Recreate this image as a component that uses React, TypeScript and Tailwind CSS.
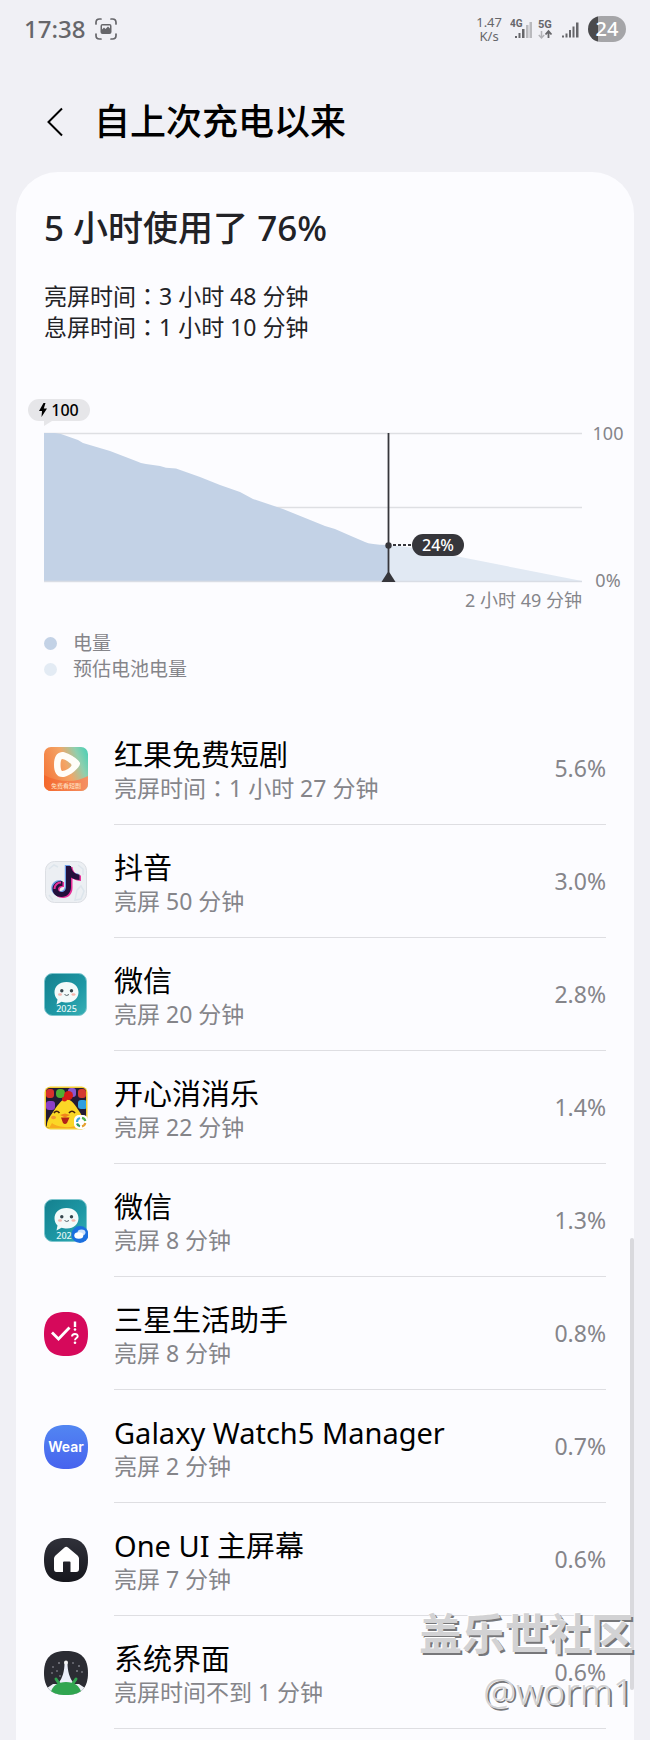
import type { ReactNode } from "react";

const SQUIRCLE =
  "M22 0C37 0 44 7 44 22C44 37 37 44 22 44C7 44 0 37 0 22C0 7 7 0 22 0Z";

function IconFrame({ children }: { children: ReactNode }) {
  return (
    <svg viewBox="0 0 44 44" className="size-11 shrink-0" aria-hidden="true">
      {children}
    </svg>
  );
}

function DramaIcon() {
  return (
    <IconFrame>
      <defs>
        <linearGradient id="drama" x1="0" y1="0.6" x2="1" y2="0.2">
          <stop offset="0" stopColor="#f5793c" />
          <stop offset="0.5" stopColor="#f3a566" />
          <stop offset="0.8" stopColor="#8fcfae" />
          <stop offset="1" stopColor="#57cfb4" />
        </linearGradient>
        <linearGradient id="dramaBase" x1="0" y1="0" x2="1" y2="0">
          <stop offset="0" stopColor="#f4682c" />
          <stop offset="1" stopColor="#f59063" />
        </linearGradient>
        <clipPath id="dramaClip">
          <rect width="44" height="44" rx="7" />
        </clipPath>
      </defs>
      <g clipPath="url(#dramaClip)">
        <rect width="44" height="44" fill="url(#drama)" />
        <path d="M0 28C8 32 16 34 24 34C32 34 38 32 44 29V44H0Z" fill="url(#dramaBase)" />
      </g>
      <path
        fillRule="evenodd"
        d="M18 5C22 4.500 35 12 36 16C37 20 26 29 20 30C13 31 10 25 10 18C10 11 12 5.500 18 5ZM18 12C16 12.500 16 24 18.500 24C21 24 28 20 27.500 18C27 16 20 11.500 18 12Z"
        fill="#fffdf8"
      />
      <text x="22" y="41" textAnchor="middle" fontSize="6" fill="#ffe6c8">
        免费看短剧
      </text>
    </IconFrame>
  );
}

const NOTE =
  "M22 6H27C27.500 11 30.500 14 35.500 14.500V20C32 20 29.500 19 27 17.500V27C27 33 23 37 17.500 37C12 37 8.500 33.500 8.500 29C8.500 24 13 20.500 18.500 21V26C16 25.500 14 27 14 29C14 30.800 15.500 32 17.500 32C20 32 22 30 22 27Z";

function MusicIcon() {
  return (
    <IconFrame>
      <rect x="1.500" y="1.500" width="41" height="41" rx="9" fill="#eceff3" stroke="#dcdfe4" />
      <path d="M5 9l5-4 4 2M34 5l5 4v6M33 30l4-4 3 5-3 8-6 1zM5 35l4 5" fill="none" stroke="#dde5ec" strokeWidth="1.500" />
      <path d={NOTE} fill="#6f9fe8" transform="translate(-1.200 -1)" />
      <path d={NOTE} fill="#e8309a" transform="translate(1.500 1)" />
      <path d={NOTE} fill="#23103c" />
      <path d="M10.500 29C10.500 25 13.500 22.500 17 22.500" fill="none" stroke="#e8309a" strokeWidth="2" />
    </IconFrame>
  );
}

function ChatIcon({ id, dual = false }: { id: string; dual?: boolean }) {
  return (
    <IconFrame>
      <defs>
        <linearGradient id={id} x1="0" y1="0" x2="1" y2="1">
          <stop offset="0" stopColor="#14808e" />
          <stop offset="0.6" stopColor="#1e98a5" />
          <stop offset="1" stopColor="#38b0b6" />
        </linearGradient>
      </defs>
      <rect x="0.500" y="0.500" width="42" height="42" rx="8" fill={`url(#${id})`} stroke="#7fc7cf" />
      <path
        d="M22.500 9C30 9 34.500 13.300 34.500 19.300C34.500 25 30 29.500 23 29.500C20.500 29.500 19 29 17.500 28.700L12.500 31.500L13.500 26.500C11.500 24.500 10.500 22.300 10.500 19.300C10.500 13.300 15 9 22.500 9Z"
        fill="#f2fafa"
      />
      <circle cx="17.800" cy="17.800" r="1.700" fill="#35464d" />
      <circle cx="27.500" cy="17.800" r="1.700" fill="#35464d" />
      <ellipse cx="16" cy="21.500" rx="2" ry="1.200" fill="#f5b5ad" />
      <ellipse cx="29.500" cy="21.500" rx="2" ry="1.200" fill="#f5b5ad" />
      <path d="M20.500 21.500Q22.700 23.500 25 21.500" fill="none" stroke="#55646a" />
      {dual ? (
        <>
          <text x="20" y="39.500" textAnchor="middle" fontSize="9" className="font-medium" fill="#e8f8f8">
            202
          </text>
          <circle cx="36" cy="35.500" r="8.500" fill="#1b6fdf" />
          <ellipse cx="37.500" cy="33.500" rx="4" ry="3" fill="#cfe2fb" />
          <ellipse cx="34.800" cy="36.500" rx="4.500" ry="3.300" fill="#fff" />
        </>
      ) : (
        <text x="22.500" y="39" textAnchor="middle" fontSize="9" className="font-medium" fill="#e8f8f8">
          2025
        </text>
      )}
    </IconFrame>
  );
}

function PuzzleIcon() {
  return (
    <IconFrame>
      <defs>
        <clipPath id="puzzleClip">
          <rect x="2" y="2" width="40" height="40" rx="4" />
        </clipPath>
      </defs>
      <rect x="0.500" y="0.500" width="43" height="43" rx="6" fill="#f3ce35" />
      <g clipPath="url(#puzzleClip)">
        <rect width="44" height="44" fill="#231b33" />
        <rect x="2" y="3" width="8" height="9" rx="3" fill="#d8322c" />
        <rect x="12" y="3" width="9" height="9" rx="4" fill="#4fae33" />
        <rect x="24" y="2" width="8" height="9" rx="3" fill="#8a55d0" />
        <rect x="34" y="3" width="8" height="9" rx="3" fill="#d43a31" />
        <rect x="2" y="15" width="9" height="9" rx="3" fill="#8c3fc7" />
        <rect x="34" y="14" width="9" height="9" rx="3" fill="#2f9fe0" />
        <path d="M21 13C27 12 32 20 35 25C39 31 41 35 40 44H4C1 37 5 32 9 26C13 20 17 14 21 13Z" fill="#fbd726" />
        <path d="M8 37C14 42 30 43 37 37L40 44H4Z" fill="#f7ac1d" />
      </g>
      <circle cx="24.500" cy="9.500" r="4.500" fill="#d51c17" />
      <circle cx="20.500" cy="13" r="2.500" fill="#d51c17" />
      <path d="M10 27Q12.500 23.500 15.500 27M25 27Q28 23.500 31 27" fill="none" stroke="#47230b" strokeWidth="1.700" />
      <path d="M16 29L21 27.500L26 29L21 31.500Z" fill="#f2851d" />
      <path d="M17 31.500H25.500L23 37Q21 39 19 37Z" fill="#b32218" />
      <ellipse cx="9.500" cy="31.500" rx="2.500" ry="1.700" fill="#f19633" />
      <rect x="30" y="29" width="14" height="14" rx="5" fill="#fff" />
      <g fill="none" strokeWidth="2.200">
        <path d="M33 36A4.300 4.300 0 0 1 36 32" stroke="#3fa6d8" />
        <path d="M38 31.800A4.300 4.300 0 0 1 41.300 35" stroke="#4bb04b" />
        <path d="M41.300 37A4.300 4.300 0 0 1 38 40.300" stroke="#e6a030" />
        <path d="M36 40.200A4.300 4.300 0 0 1 33 37.500" stroke="#2f9a62" />
      </g>
    </IconFrame>
  );
}

function MembersIcon() {
  return (
    <IconFrame>
      <path d={SQUIRCLE} fill="#d6095b" />
      <path d="M8 20.500L14.500 27L25.500 15.500" fill="none" stroke="#fff" strokeWidth="2.800" />
      <path d="M31 9.500V15" stroke="#fff" strokeWidth="2.400" />
      <circle cx="31" cy="17.500" r="1.300" fill="#fff" />
      <path d="M28 24.500C28 21 34 21.200 33.700 24.300C33.500 26 31 26 31 28.200" fill="none" stroke="#fff" strokeWidth="1.900" />
      <circle cx="31" cy="30.800" r="1.300" fill="#fff" />
    </IconFrame>
  );
}

function WearIcon() {
  return (
    <IconFrame>
      <defs>
        <linearGradient id="wear" x1="0" y1="0" x2="0" y2="1">
          <stop offset="0" stopColor="#5286f2" />
          <stop offset="1" stopColor="#4763ee" />
        </linearGradient>
      </defs>
      <path d={SQUIRCLE} fill="url(#wear)" />
      <text x="22" y="26.500" textAnchor="middle" fontSize="14" className="font-['Inter',sans-serif] font-semibold" fill="#fff">
        Wear
      </text>
    </IconFrame>
  );
}

function HomeIcon() {
  return (
    <IconFrame>
      <defs>
        <linearGradient id="home" x1="0" y1="0" x2="0" y2="1">
          <stop offset="0" stopColor="#30313a" />
          <stop offset="1" stopColor="#16171d" />
        </linearGradient>
      </defs>
      <path d={SQUIRCLE} fill="url(#home)" />
      <path
        d="M20.500 9.500Q22.200 8.200 24 9.500L33.500 17.500Q35 19 35 20.500V31Q35 34 32 34H26.500V24.500Q26.500 23.500 25.500 23.500H20Q19 23.500 19 24.500V34H12.500Q10 34 10 31V20.500Q10 19 11.500 17.500Z"
        fill="#fff"
      />
    </IconFrame>
  );
}

function SystemIcon() {
  return (
    <IconFrame>
      <defs>
        <clipPath id="systemClip">
          <path d={SQUIRCLE} />
        </clipPath>
      </defs>
      <g clipPath="url(#systemClip)">
        <rect width="44" height="44" fill="#2b2c33" />
        <path d="M0 39L9 33H35L44 39V44H0Z" fill="#eef1f7" />
        <path d="M20.500 12H23.500C23.500 20 25.500 27 29.500 32H14.500C18.500 27 20.500 20 20.500 12Z" fill="#eceffa" />
        <path d="M6 44C8 34 14 31 22 31C30 31 36 34 38 44Z" fill="#30a550" />
        <path d="M12 28L16 34M32 28L28 34" stroke="#30a550" strokeWidth="3" strokeLinecap="round" />
      </g>
      <circle cx="22" cy="11.500" r="2" fill="#f3f3f3" />
      <g fill="#b9bbc4">
        <circle cx="15" cy="12" r="0.800" />
        <circle cx="9" cy="16" r="0.700" />
        <circle cx="13" cy="20" r="0.700" />
        <circle cx="8" cy="22" r="0.700" />
        <circle cx="29" cy="12" r="0.700" />
        <circle cx="35" cy="15" r="0.800" />
        <circle cx="33" cy="20" r="0.800" />
        <circle cx="38" cy="21" r="0.700" />
        <circle cx="16" cy="25" r="0.700" />
      </g>
    </IconFrame>
  );
}

/* Full-width colon, centred in its cell. */
function Colon() {
  return (
    <span lang="zh-TW" className="font-['Noto_Sans_CJK_TC',sans-serif] leading-none">
      {"\uFF1A"}
    </span>
  );
}

const apps: { icon: ReactNode; name: string; usage: ReactNode; share: string }[] = [
  { icon: <DramaIcon />, name: "红果免费短剧", usage: <>亮屏时间<Colon />1 小时 27 分钟</>, share: "5.6%" },
  { icon: <MusicIcon />, name: "抖音", usage: "亮屏 50 分钟", share: "3.0%" },
  { icon: <ChatIcon id="chat" />, name: "微信", usage: "亮屏 20 分钟", share: "2.8%" },
  { icon: <PuzzleIcon />, name: "开心消消乐", usage: "亮屏 22 分钟", share: "1.4%" },
  { icon: <ChatIcon id="chatDual" dual />, name: "微信", usage: "亮屏 8 分钟", share: "1.3%" },
  { icon: <MembersIcon />, name: "三星生活助手", usage: "亮屏 8 分钟", share: "0.8%" },
  { icon: <WearIcon />, name: "Galaxy Watch5 Manager", usage: "亮屏 2 分钟", share: "0.7%" },
  { icon: <HomeIcon />, name: "One UI 主屏幕", usage: "亮屏 7 分钟", share: "0.6%" },
  { icon: <SystemIcon />, name: "系统界面", usage: "亮屏时间不到 1 分钟", share: "0.6%" },
];

function StatusBar() {
  return (
    <div className="flex h-14 items-center justify-between px-6 pt-0.5 text-[#66666a]">
      <div className="flex items-center gap-2.5">
        <span className="text-2xl leading-8 font-medium">17:38</span>
        <svg viewBox="0 0 22 22" className="size-[22px]" aria-hidden="true">
          <path
            d="M1 6V4.500Q1 1 4.500 1H6M16 1H17.500Q21 1 21 4.500V6M21 16V17.500Q21 21 17.500 21H16M6 21H4.500Q1 21 1 17.500V16"
            fill="none"
            stroke="currentColor"
            strokeWidth="1.700"
            strokeLinecap="round"
          />
          <path
            fillRule="evenodd"
            d="M7.500 6H14.500Q16.500 6 16.500 8V14Q16.500 16 14.500 16H7.500Q5.500 16 5.500 14V8Q5.500 6 7.500 6ZM7 7.500V11.500L9 9.500L10.500 11L13 8.500L15 10.500V7.500Z"
            fill="currentColor"
          />
        </svg>
      </div>
      <div className="flex items-center">
        <div className="mr-2 text-center text-[13px] leading-[14px]">
          1.47
          <br />
          K/s
        </div>
        <svg viewBox="0 0 70 24" className="mr-2 h-6 w-[70px]" aria-hidden="true">
          <g fill="currentColor">
            <text x="0" y="10" fontSize="10" className="font-['Roboto',sans-serif] font-bold">
              4G
            </text>
            <rect x="5" y="19" width="2" height="2" />
            <rect x="8.500" y="16" width="2" height="5" />
            <rect x="12" y="12" width="2.500" height="9" />
            <rect x="16" y="8" width="2.500" height="13" opacity="0.400" />
            <rect x="19.500" y="5" width="2.500" height="16" opacity="0.400" />
            <text x="28" y="11" fontSize="11" className="font-['Roboto',sans-serif] font-bold">
              5G
            </text>
            <path d="M52 18.500h2v2h-2zM55.500 16.500h2v4h-2zM59 13h2v7.500h-2zM62.500 9.500h2v11h-2zM66 5.500h2.500v15H66z" />
          </g>
          <path d="M31.500 14V20.500M28.800 18L31.500 21L34.200 18" fill="none" stroke="currentColor" strokeWidth="1.500" opacity="0.450" />
          <path d="M38.500 21V14.500M35.500 17.500L38.500 14.200L41.500 17.500" fill="none" stroke="currentColor" strokeWidth="1.800" />
        </svg>
        <div className="flex h-[26px] w-[38px] items-center justify-center rounded-full bg-linear-to-r from-[#4a4a4c] from-25% to-[#a5a5a8] to-25% text-xl leading-none font-medium text-white">
          24
        </div>
      </div>
    </div>
  );
}

function BatteryChart() {
  return (
    <section aria-label="电量" className="mt-14 pl-7">
      <div className="relative -ml-4 flex h-[22px] w-[62px] items-center justify-center gap-1 rounded-full bg-[#e6e6e9] text-base text-black">
        <svg viewBox="0 0 8 14" className="h-3.5 w-2" aria-hidden="true">
          <path d="M4.500 0L0 8H3L2.500 14L8 5.500H4.800L6.500 0Z" />
        </svg>
        <span className="leading-none font-medium">100</span>
        <svg viewBox="0 0 8 5" className="absolute top-full left-4 h-[5px] w-2" aria-hidden="true">
          <path d="M0 0H8L0 5Z" fill="#e6e6e9" />
        </svg>
      </div>
      <div className="mt-3 flex">
        <div className="relative flex-1">
          <svg viewBox="0 0 538 149" className="block h-auto w-full overflow-visible" aria-hidden="true">
            <path d="M0 0.500H538M0 74.500H538" stroke="#dedfe3" strokeWidth="1.300" />
            <path d="M344 112Q370 114 391 119L538 148H344Z" fill="#e1e9f3" />
            <path
              d="M0 0H11L17 1L34 7L39 10L66 18L92 28Q97 30.500 102 31L116 33L122 34.700L132 35.500L156 44L176 52L196 59L209 66L239 76L281 93L291 96L307 103L321 109Q326 111.500 344 112V148H0Z"
              fill="#c3d2e6"
            />
            <path d="M0 148.500H538" stroke="#d9dde5" strokeWidth="1.300" />
            <path d="M344.500 0V148" stroke="#36363b" strokeWidth="1.800" />
            <circle cx="344.500" cy="112.500" r="3.200" fill="#36363b" />
            <path d="M349 112H368" stroke="#36363b" strokeWidth="2" strokeDasharray="3 2" />
            <path d="M337.500 149L343.500 139.500H345.500L351.500 149Z" fill="#36363b" />
          </svg>
          <span className="absolute top-[75%] left-[68.4%] flex h-[22px] w-[52px] -translate-y-1/2 items-center justify-center rounded-full bg-[#36363b] text-base leading-none font-medium text-white">
            24%
          </span>
        </div>
        <div className="-mt-2.5 -mb-2 flex w-[52px] flex-col items-center justify-between text-lg leading-5 text-[#85858a]">
          <span>100</span>
          <span>0%</span>
        </div>
      </div>
      <p className="mt-1.5 pr-[52px] text-right text-lg leading-6 text-[#85858a]">2 小时 49 分钟</p>
      <ul className="mt-[18px] text-[19px] leading-[26px] text-[#85858a]">
        <li className="flex items-center gap-4">
          <span className="size-[13px] rounded-full bg-[#c3d2e6]" />
          电量
        </li>
        <li className="flex items-center gap-4">
          <span className="size-[13px] rounded-full bg-[#e3ebf4]" />
          预估电池电量
        </li>
      </ul>
    </section>
  );
}

export default function App() {
  return (
    <div className="relative min-h-screen overflow-hidden border-b border-[#bdbdc0] bg-[#f0f0f5] font-['Noto_Sans','Noto_Sans_CJK_SC',sans-serif]">
      <StatusBar />
      <header className="flex h-[116px] items-center gap-[30px] pt-4 pl-[46px]">
        <button type="button" aria-label="返回" className="text-black">
          <svg viewBox="0 0 18 30" className="h-[30px] w-[18px]" fill="none" stroke="currentColor" strokeWidth="2">
            <path d="M16 1.500L2.500 15L16 28.500" />
          </svg>
        </button>
        <h1 className="text-4xl leading-[48px] font-medium text-black">自上次充电以来</h1>
      </header>

      <main className="mx-4 rounded-t-[42px] bg-[#fcfcff] pt-8 pb-[11px]">
        <h2 className="pl-7 text-[35px] leading-[48px] font-medium text-[#222226]">5 小时使用了 76%</h2>
        <div className="mt-[29px] pl-7 text-[23px] leading-[31px] text-[#222226]">
          <p>亮屏时间<Colon />3 小时 48 分钟</p>
          <p>息屏时间<Colon />1 小时 10 分钟</p>
        </div>

        <BatteryChart />

        <ul className="mt-[30px]">
          {apps.map((app, i) => (
            <li key={i} className="flex items-center gap-[26px] px-7">
              {app.icon}
              <div className="flex flex-1 items-center justify-between border-b border-[#dedee2]">
                <div className="pt-[25px] pb-[21px]">
                  <h3 className="text-[29px] leading-9 text-black">{app.name}</h3>
                  <p className="text-[23px] leading-[30px] text-[#85858a]">{app.usage}</p>
                </div>
                <span className="text-[23px] leading-8 text-[#85858a]">{app.share}</span>
              </div>
            </li>
          ))}
        </ul>
      </main>

      <div className="absolute right-4 bottom-[50px] h-[452px] w-1 rounded-full bg-[#d9d9dd]" />
      <div className="pointer-events-none absolute right-4 bottom-6 text-right text-[#d2d2d4] [text-shadow:-1px_-1px_0_#ffffff,2px_2px_0_#77777a]">
        <p className="text-[43px] leading-[64px] font-bold">盖乐世社区</p>
        <p className="text-[37px] leading-[50px] font-light">@worm1</p>
      </div>
    </div>
  );
}
